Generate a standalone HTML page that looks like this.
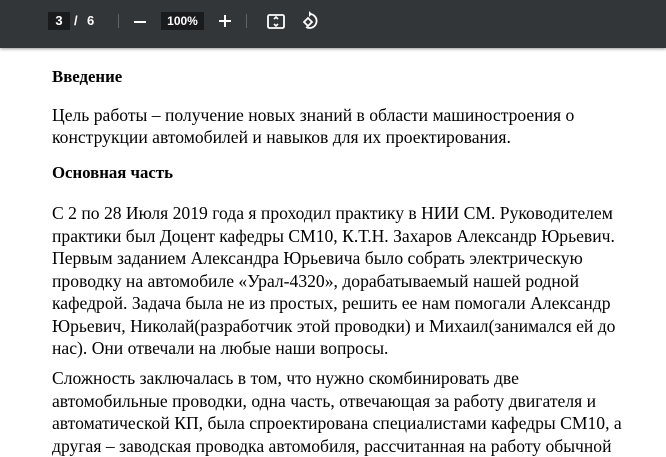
<!DOCTYPE html>
<html><head><meta charset="utf-8"><style>
html,body{margin:0;padding:0;width:666px;height:438px;overflow:hidden;background:#fff;}
.tb{position:absolute;left:0;top:0;width:666px;height:48px;background:#323639;box-shadow:0 1px 3px rgba(0,0,0,.4);font-family:"Liberation Sans",sans-serif;color:#fff;}
.pg{position:absolute;left:48px;top:12px;width:22px;height:18px;background:#191b1c;font-size:13px;font-weight:bold;text-align:center;line-height:18px;}
.t{position:absolute;font-size:13px;font-weight:bold;line-height:18px;top:12px;}
.sep{position:absolute;top:14px;width:1px;height:14px;background:#5f6368;}
.zoom{position:absolute;left:161px;top:12px;width:43px;height:18px;background:#191b1c;font-size:12px;font-weight:bold;text-align:center;line-height:18px;}
.l{position:absolute;left:52px;white-space:nowrap;font-family:"Liberation Serif",serif;font-size:17.6px;color:#000;line-height:22px;}
.h{font-weight:bold;font-size:16.8px;}
</style></head><body>
<div class="tb">
<div class="pg">3</div>
<div class="t" style="left:74px">/</div>
<div class="t" style="left:87px">6</div>
<div class="sep" style="left:118px"></div>
<svg style="position:absolute;left:132px;top:14px" width="16" height="16"><path d="M2 8H14" stroke="#fff" stroke-width="2"/></svg>
<div class="zoom">100%</div>
<svg style="position:absolute;left:217px;top:13px" width="16" height="16"><path d="M2 8H14M8 2V14" stroke="#fff" stroke-width="2"/></svg>
<div class="sep" style="left:246px"></div>
<svg style="position:absolute;left:266px;top:12px" width="20" height="20"><rect x="2" y="3" width="16" height="13" rx="1.5" fill="none" stroke="#fff" stroke-width="1.8"/><path d="M8 7L10 5L12 7M8 12L10 14L12 12" stroke="#fff" stroke-width="1.6" fill="none"/></svg>
<svg style="position:absolute;left:300px;top:11px" width="20" height="20"><path d="M9 3A7 7 0 1 1 6 16" fill="none" stroke="#fff" stroke-width="1.8"/><path d="M9 0L9 6L12 3Z" fill="#fff"/><path d="M4 11L8 7L12 11L8 15Z" fill="none" stroke="#fff" stroke-width="1.8"/></svg>
</div>
<div class="l h" style="top:66px">Введение</div>
<div class="l" style="top:104px">Цель работы – получение новых знаний в области машиностроения о</div>
<div class="l" style="top:126px">конструкции автомобилей и навыков для их проектирования.</div>
<div class="l h" style="top:162px">Основная часть</div>
<div class="l" style="top:202px">С 2 по 28 Июля 2019 года я проходил практику в НИИ СМ. Руководителем</div>
<div class="l" style="top:224.5px">практики был Доцент кафедры СМ10, К.Т.Н. Захаров Александр Юрьевич.</div>
<div class="l" style="top:247px">Первым заданием Александра Юрьевича было собрать электрическую</div>
<div class="l" style="top:269.5px">проводку на автомобиле «Урал-4320», дорабатываемый нашей родной</div>
<div class="l" style="top:292px">кафедрой. Задача была не из простых, решить ее нам помогали Александр</div>
<div class="l" style="top:314.5px">Юрьевич, Николай(разработчик этой проводки) и Михаил(занимался ей до</div>
<div class="l" style="top:337px">нас). Они отвечали на любые наши вопросы.</div>
<div class="l" style="top:367px">Сложность заключалась в том, что нужно скомбинировать две</div>
<div class="l" style="top:389.5px">автомобильные проводки, одна часть, отвечающая за работу двигателя и</div>
<div class="l" style="top:412px">автоматической КП, была спроектирована специалистами кафедры СМ10, а</div>
<div class="l" style="top:434.5px">другая – заводская проводка автомобиля, рассчитанная на работу обычной</div>
</body></html>
